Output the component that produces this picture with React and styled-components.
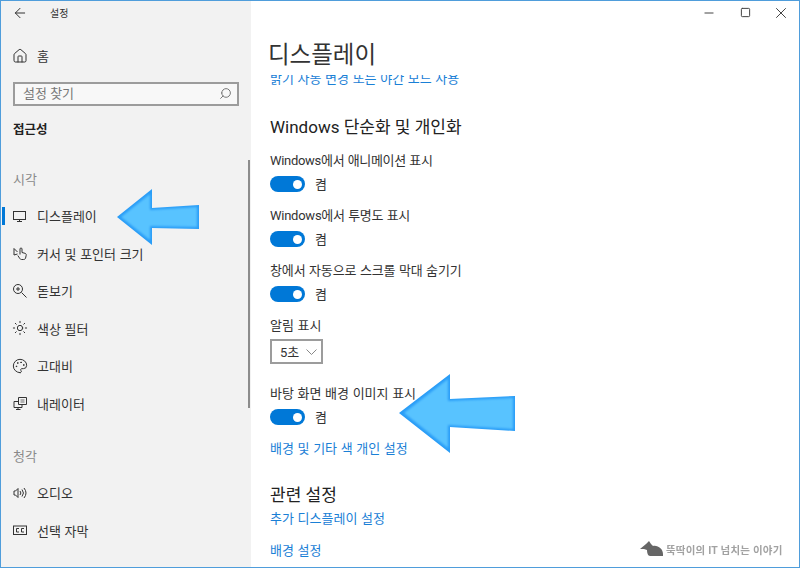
import React from "react"
import styled, { createGlobalStyle } from "styled-components"
import { ArrowLeft, Home, Search, Minus, Square, X, Sun, Palette } from "lucide-react"

const GlobalStyle = createGlobalStyle`
	html, body {
		margin: 0;
		padding: 0;
		background: #fff;
	}
	body {
		font-family: Roboto, "Noto Sans CJK KR", sans-serif;
		color: #262626;
	}
`

const Window = styled.div`
	position: relative;
	box-sizing: border-box;
	width: 800px;
	height: 568px;
	border: 1px solid #4f9ddb;
	display: flex;
	overflow: hidden;
	background: #fff;
`

const Sidebar = styled.aside`
	position: relative;
	width: 250px;
	flex: none;
	background: #f2f2f2;
`

const BackBar = styled.div`
	box-sizing: border-box;
	height: 25px;
	display: flex;
	align-items: center;
	padding: 0 0 2px 11px;
	gap: 22px;
	font-size: 10px;
	color: #333;
`

const NavRow = styled.div`
	position: relative;
	height: 37.5px;
	display: flex;
	align-items: center;
	gap: 9px;
	padding-left: 11px;
	font-size: 13px;
	word-spacing: 0.4px;
	color: #333;
	svg {
		flex: none;
	}
	${props =>
		props.$active &&
		`
		&::before {
			content: "";
			position: absolute;
			left: 1px;
			top: 10px;
			width: 3px;
			height: 18px;
			background: #0078d7;
		}
	`}
`

const HomeRow = styled(NavRow)`
	margin-top: 11px;
`

const SearchBox = styled.div`
	box-sizing: border-box;
	margin: 7px 0 0 12px;
	width: 226px;
	height: 24px;
	border: 2px solid #9c9c9c;
	background: #f8f8f8;
	display: flex;
	align-items: center;
	justify-content: space-between;
	padding: 0 5px 0 8px;
	font-size: 13px;
	line-height: 18px;
	color: #777;
`

const SidebarTitle = styled.div`
	margin: 13px 0 0 12px;
	height: 20px;
	line-height: 22px;
	font-size: 12.5px;
	font-weight: 700;
	color: #222;
`

const GroupLabel = styled.div`
	margin: ${props => props.$top}px 0 8.25px 12px;
	height: 20px;
	line-height: 22px;
	font-size: 13px;
	color: #8a8a8a;
`

const ScrollThumb = styled.div`
	position: absolute;
	right: 1px;
	top: 159px;
	width: 2px;
	height: 248px;
	background: #8c8c8c;
`

const Main = styled.main`
	flex: 1;
	min-width: 0;
	display: flex;
	flex-direction: column;
`

const Header = styled.header`
	height: 74px;
	flex: none;
`

const Controls = styled.div`
	box-sizing: border-box;
	height: 25px;
	padding-bottom: 2px;
	display: flex;
	justify-content: flex-end;
	color: #444;
`

const ControlButton = styled.div`
	width: 36px;
	display: flex;
	align-items: center;
	justify-content: center;
`

const PageTitle = styled.h1`
	margin: 12px 0 0 17px;
	height: 34px;
	line-height: 34px;
	font-size: 23.5px;
	font-weight: 400;
	color: #333;
`

const Scroller = styled.div`
	flex: 1;
	overflow: hidden;
	padding-left: 19px;
`

const SettingLink = styled.div`
	margin-top: ${props => props.$top || 0}px;
	height: 20px;
	line-height: 22px;
	font-size: 13px;
	word-spacing: 0.4px;
	color: #1a80d6;
`

const SectionHeading = styled.h2`
	margin: ${props => props.$top}px 0 0 0;
	height: 26px;
	line-height: 26px;
	font-size: 17px;
	font-weight: 400;
	color: #222;
`

const Label = styled.div`
	margin-top: ${props => props.$top}px;
	height: 20px;
	line-height: 21px;
	font-size: 13px;
	word-spacing: 0.4px;
	letter-spacing: ${props => props.$spacing || 0}px;
	color: #333;
`

const ToggleRow = styled.div`
	margin-top: 4px;
	height: 20px;
	display: flex;
	align-items: center;
	gap: 10px;
	font-size: 13px;
	color: #333;
`

const ToggleState = styled.span`
	margin-top: -2px;
`

const Toggle = styled.div`
	box-sizing: border-box;
	width: 35px;
	height: 16px;
	border-radius: 8px;
	background: #0078d7;
	display: flex;
	align-items: center;
	justify-content: flex-end;
	padding-right: 3px;
	&::after {
		content: "";
		width: 9px;
		height: 9px;
		border-radius: 50%;
		background: #fff;
	}
`

const Select = styled.div`
	box-sizing: border-box;
	margin-top: 4px;
	width: 53px;
	height: 25px;
	border: 2px solid #9c9c9c;
	display: flex;
	align-items: center;
	justify-content: space-between;
	padding: 0 4px 0 8px;
	font-size: 13px;
	color: #333;
`

const ArrowMark = styled.svg`
	position: absolute;
	left: 0;
	top: 0;
	pointer-events: none;
`

const Watermark = styled.div`
	position: absolute;
	left: 639px;
	top: 540px;
	display: flex;
	align-items: center;
	gap: 3px;
	font-size: 10.5px;
	font-weight: 700;
	letter-spacing: 0.2px;
	color: #a2a2a2;
	filter: blur(0.5px);
`

const CustomIcon = ({ children }) => (
	<svg width="16" height="16" viewBox="-1 -1 16 16" fill="none" stroke="currentColor" strokeWidth="1">
		{children}
	</svg>
)

const MonitorIcon = () => (
	<CustomIcon>
		<rect x="0.5" y="2.5" width="12" height="8" />
		<path d="M6.5 10.5v2M4 12.5h5" />
	</CustomIcon>
)

const CursorIcon = () => (
	<CustomIcon>
		<path d="M1 2.5 4.5 6M1 2.5V9l3.5 -1M7 8.5V3a1 1 0 0 1 2 0v3.5l3 .8c1 .3 1.4 1 1.2 2L12.6 12c-.3 1-1 1.5-2 1.5H8.5c-.8 0-1.3-.4-1.7-1L4.8 9.5" />
	</CustomIcon>
)

const MagnifierIcon = () => (
	<CustomIcon>
		<circle cx="5" cy="5" r="4.5" />
		<path d="M8.5 8.5l5 5M5 3v4M3 5h4" />
	</CustomIcon>
)

const NarratorIcon = () => (
	<CustomIcon>
		<path d="M5.5 1.5h8v7h-8zM1 5.5h4M1 5.5v6h8V8.5M5 11.5v2M3 13.5h4.5" />
		<path d="M7.5 4h4M7.5 6h4" strokeWidth="0.7" />
	</CustomIcon>
)

const AudioIcon = () => (
	<CustomIcon>
		<path d="M1 5v4h1.5L5 11.5v-9L2.5 5z" />
		<path d="M7 5a3 3 0 0 1 0 4M9 3.5a5.5 5.5 0 0 1 0 7M11 2a8 8 0 0 1 0 10" />
	</CustomIcon>
)

const CaptionIcon = () => (
	<CustomIcon>
		<rect x="0.5" y="3" width="13" height="8.5" />
		<path d="M6 5.5H3.5v3.5H6M11 5.5H8.5v3.5H11" />
	</CustomIcon>
)

const iconProps = { size: 16, strokeWidth: 1, absoluteStrokeWidth: true }

const visionItems = [
	{ label: "디스플레이", icon: <MonitorIcon />, active: true },
	{ label: "커서 및 포인터 크기", icon: <CursorIcon /> },
	{ label: "돋보기", icon: <MagnifierIcon /> },
	{ label: "색상 필터", icon: <Sun {...iconProps} /> },
	{ label: "고대비", icon: <Palette {...iconProps} /> },
	{ label: "내레이터", icon: <NarratorIcon /> },
]

const hearingItems = [
	{ label: "오디오", icon: <AudioIcon /> },
	{ label: "선택 자막", icon: <CaptionIcon /> },
]

const BlueArrow = ({ outer, inner }) => (
	<>
		<polygon points={outer} fill="#2a9df7" />
		<polygon points={inner} fill="#58c3ff" filter="url(#arrowSoften)" />
	</>
)

const NavItem = ({ item }) => (
	<NavRow $active={item.active}>
		{item.icon}
		<span>{item.label}</span>
	</NavRow>
)

const ToggleSetting = ({ label, top, spacing }) => (
	<>
		<Label $top={top} $spacing={spacing}>
			{label}
		</Label>
		<ToggleRow>
			<Toggle />
			<ToggleState>켬</ToggleState>
		</ToggleRow>
	</>
)

export default function App() {
	return (
		<Window>
			<GlobalStyle />
			<Sidebar>
				<BackBar>
					<ArrowLeft {...iconProps} />
					<span>설정</span>
				</BackBar>
				<HomeRow>
					<Home {...iconProps} />
					<span>홈</span>
				</HomeRow>
				<SearchBox>
					<span>설정 찾기</span>
					<Search size={13} strokeWidth={1} absoluteStrokeWidth style={{ transform: "scaleX(-1)" }} />
				</SearchBox>
				<SidebarTitle>접근성</SidebarTitle>
				<GroupLabel $top={30}>시각</GroupLabel>
				{visionItems.map(item => (
					<NavItem key={item.label} item={item} />
				))}
				<GroupLabel $top={24}>청각</GroupLabel>
				{hearingItems.map(item => (
					<NavItem key={item.label} item={item} />
				))}
				<ScrollThumb />
			</Sidebar>
			<Main>
				<Header>
					<Controls>
						<ControlButton>
							<Minus size={14} strokeWidth={1} absoluteStrokeWidth />
						</ControlButton>
						<ControlButton>
							<Square size={11} strokeWidth={1} absoluteStrokeWidth />
						</ControlButton>
						<ControlButton>
							<X size={18} strokeWidth={1} absoluteStrokeWidth />
						</ControlButton>
					</Controls>
					<PageTitle>디스플레이</PageTitle>
				</Header>
				<Scroller>
					{/* scrolled under the header, so its top is cut off as in the reference */}
					<SettingLink $top={-7}>밝기 자동 변경 또는 야간 모드 사용</SettingLink>
					<SectionHeading $top={26}>Windows 단순화 및 개인화</SectionHeading>
					<ToggleSetting top={10} spacing={-0.3} label="Windows에서 애니메이션 표시" />
					<ToggleSetting top={11} spacing={-0.25} label="Windows에서 투명도 표시" />
					<ToggleSetting top={11} spacing={-0.12} label="창에서 자동으로 스크롤 막대 숨기기" />
					<Label $top={11}>알림 표시</Label>
					<Select>
						<span>5초</span>
						<svg width="11" height="6" viewBox="0 0 11 6" fill="none" stroke="#888" strokeWidth="1">
							<path d="M.5.5l5 5 5-5" />
						</svg>
					</Select>
					<ToggleSetting top={19} label="바탕 화면 배경 이미지 표시" />
					<SettingLink $top={11}>배경 및 기타 색 개인 설정</SettingLink>
					<SectionHeading $top={24}>관련 설정</SectionHeading>
					<SettingLink>추가 디스플레이 설정</SettingLink>
					<SettingLink $top={12}>배경 설정</SettingLink>
				</Scroller>
			</Main>
			<ArrowMark width="798" height="566" viewBox="1 1 798 566">
				<defs>
					<filter id="arrowSoften" x="-10%" y="-10%" width="120%" height="120%">
						<feGaussianBlur stdDeviation="0.8" />
					</filter>
				</defs>
				<BlueArrow
					outer="117,217 152,189 152,208 199,205 199,229 152,228 152,245"
					inner="121,217 150,194 150,210 197,207 197,227 150,226 150,240"
				/>
				<BlueArrow
					outer="399,413 450,374 450,399 515,396 515,431 450,427 450,453"
					inner="404,413 448,379 448,401 513,398 513,429 448,425 448,448"
				/>
			</ArrowMark>
			<Watermark>
				<svg width="23" height="16" viewBox="0 0 23 16" fill="#666">
					<path d="M0 8 6 3 9 0l2 3 2 2c5-1 10 3 10 8v2H10C8 15 7 12 7 9L4 8z" />
				</svg>
				<span>뚝딱이의 IT 넘치는 이야기</span>
			</Watermark>
		</Window>
	)
}
